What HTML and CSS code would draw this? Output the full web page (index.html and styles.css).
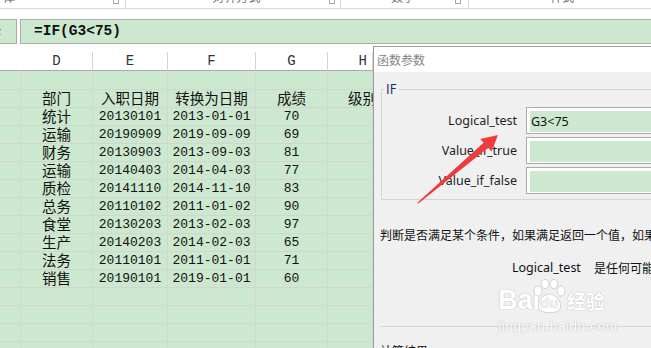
FILE: index.html
```html
<!DOCTYPE html>
<html lang="zh-CN">
<head>
    <meta charset="UTF-8">
    <title>函数参数</title>
    <link rel="stylesheet" href="styles.css">
</head>
<body>
    <div class="ribbon">
        <div class="group g1"><span class="glabel">字体</span><span class="launch"></span></div>
        <div class="group g2"><span class="glabel">对齐方式</span><span class="launch"></span></div>
        <div class="group g3"><span class="glabel">数字</span><span class="launch"></span></div>
        <div class="group g4"><span class="glabel">样式</span></div>
    </div>

    <div class="formula">
        <div class="fx-box"><span class="fx">fx</span></div>
        <div class="formula-box">=IF(G3&lt;75)</div>
    </div>

    <div class="sheet">
        <div class="row head"><div></div><div>D</div><div>E</div><div>F</div><div>G</div><div class="h">H</div></div>
        <div class="row first"><div></div><div></div><div></div><div></div><div></div><div></div></div>
        <div class="row titles"><div></div><div>部门</div><div>入职日期</div><div>转换为日期</div><div>成绩</div><div class="lvl">级别</div></div>
        <div class="row"><div></div><div>统计</div><div>20130101</div><div>2013-01-01</div><div>70</div><div></div></div>
        <div class="row"><div></div><div>运输</div><div>20190909</div><div>2019-09-09</div><div>69</div><div></div></div>
        <div class="row"><div></div><div>财务</div><div>20130903</div><div>2013-09-03</div><div>81</div><div></div></div>
        <div class="row"><div></div><div>运输</div><div>20140403</div><div>2014-04-03</div><div>77</div><div></div></div>
        <div class="row"><div></div><div>质检</div><div>20141110</div><div>2014-11-10</div><div>83</div><div></div></div>
        <div class="row"><div></div><div>总务</div><div>20110102</div><div>2011-01-02</div><div>90</div><div></div></div>
        <div class="row"><div></div><div>食堂</div><div>20130203</div><div>2013-02-03</div><div>97</div><div></div></div>
        <div class="row"><div></div><div>生产</div><div>20140203</div><div>2014-02-03</div><div>65</div><div></div></div>
        <div class="row"><div></div><div>法务</div><div>20110101</div><div>2011-01-01</div><div>71</div><div></div></div>
        <div class="row"><div></div><div>销售</div><div>20190101</div><div>2019-01-01</div><div>60</div><div></div></div>
        <div class="row"><div></div><div></div><div></div><div></div><div></div><div></div></div>
        <div class="row"><div></div><div></div><div></div><div></div><div></div><div></div></div>
        <div class="row"><div></div><div></div><div></div><div></div><div></div><div></div></div>
        <div class="row"><div></div><div></div><div></div><div></div><div></div><div></div></div>
    </div>

    <div class="dialog">
        <div class="dlg-title">函数参数</div>
        <div class="dlg-body">
            <fieldset class="args">
                <legend>IF</legend>
                <div class="arg"><label>Logical_test</label><div class="field"><div class="val">G3&lt;75</div></div></div>
                <div class="arg"><label>Value_if_true</label><div class="field"><div class="val"></div></div></div>
                <div class="arg"><label>Value_if_false</label><div class="field"><div class="val"></div></div></div>
            </fieldset>
            <p class="desc">判断是否满足某个条件，如果满足返回一个值，如果不满足则返回另一个值。</p>
            <p class="argdesc"><span>Logical_test</span><span>是任何可能被计算为 TRUE 或 FALSE 的数值或表达式。</span></p>
            <hr>
            <p class="result">计算结果 =</p>
        </div>
    </div>

    <!-- baidu jingyan watermark -->
    <div class="watermark">
        <div class="wm-logo">
            <span class="bai">Bai</span>
            <span class="paw">
                <svg width="34" height="36" viewBox="0 0 34 36">
                    <g fill="#fff" stroke="#d2d2d2" stroke-width="1">
                        <ellipse cx="6" cy="12" rx="4" ry="5"/>
                        <ellipse cx="13" cy="5" rx="4" ry="4.5"/>
                        <ellipse cx="22" cy="5" rx="4" ry="4.5"/>
                        <ellipse cx="29" cy="12" rx="4" ry="5"/>
                        <path d="M7 30 C4 22 12 15 17 15 C23 15 31 22 28 30 C26 35 9 35 7 30 Z"/>
                    </g>
                </svg>
                <span class="du">du</span>
            </span>
            <span class="jy">经验</span>
        </div>
        <div class="wm-url">jingyan.baidu.com</div>
    </div>

    <svg class="arrow" width="651" height="348" viewBox="0 0 651 348">
        <polygon fill="#ee3b3b" points="417.6,202.6 483.6,142.8 480.2,139 498,135 491.6,151.6 488.2,147.8 418.4,203.4"/>
    </svg>
</body>
</html>
```

FILE: styles.css
```css
* {
    box-sizing: border-box;
}
body {
    margin: 0;
    width: 651px;
    height: 348px;
    overflow: hidden;
    position: relative;
    background: #fff;
    font-family: "Noto Sans", "Noto Sans CJK SC", sans-serif;
    color: #111;
}

/* ribbon (only the bottom edge shows) */
.ribbon {
    display: flex;
    height: 9px;
    border-bottom: 1px solid #dadada;
    overflow: hidden;
}
.group {
    display: flex;
    align-items: flex-start;
    border-right: 1px solid #d8d8d8;
    font-family: "Noto Sans CJK SC", sans-serif;
    font-size: 12px;
    color: #777;
}
.glabel {
    line-height: 14px;
    margin-top: -10px;
}
.launch {
    width: 6px;
    height: 6px;
    margin-top: -2px;
    margin-left: auto;
    border: 1px solid #a8a8a8;
}
.g1 { width: 138px; }
.g1 .glabel { margin-left: -9px; }
.g1 .launch { margin-right: 6px; }
.g2 { width: 237px; }
.g2 .glabel { margin-left: 87px; }
.g2 .launch { margin-right: 5px; }
.g3 { width: 141px; }
.g3 .glabel { margin-left: 50px; }
.g3 .launch { margin-right: 7px; }
.g4 { width: 200px; border-right: 0; }
.g4 .glabel { margin-left: 81px; }

/* formula bar */
.formula {
    display: flex;
    height: 25px;
    margin-top: 10px;
}
.fx-box {
    width: 17px;
    border: 1px solid #ababab;
    border-left: 0;
    background: #cce8cf;
    overflow: hidden;
}
.fx {
    display: block;
    margin-left: -9px;
    font: italic bold 12px "Liberation Serif", serif;
    line-height: 22px;
    color: #2d8a3a;
}
.formula-box {
    flex: 1;
    margin-left: 3px;
    border: 1px solid #ababab;
    border-right: 0;
    background: #cce8cf;
    padding-left: 13px;
    font: bold 14.5px "Liberation Mono", monospace;
    line-height: 23px;
}

/* grid */
.sheet {
    margin-top: 8px;
    font: 13px "Liberation Mono", "Noto Sans CJK SC", monospace;
}
.row {
    display: grid;
    grid-template-columns: 21px 72px 75px 88px 72px 45px;
    height: 18px;
}
.row > div {
    border-right: 1px solid #d4d4d4;
    border-bottom: 1px solid #d4d4d4;
    background: #cce8cf;
    text-align: center;
    line-height: 17px;
    white-space: nowrap;
}
.row > div:nth-child(2),
.titles > div {
    font-family: "Noto Sans CJK SC", sans-serif;
    font-size: 14.5px;
    line-height: 15px;
}
.row.head,
.row.first {
    height: 19px;
}
.row.head > div {
    background: #fff;
    border-bottom-color: #a9a9a9;
    line-height: 18px;
    color: #333;
    font-family: "Liberation Mono", monospace;
    font-size: 14px;
}
.row.head > div:first-child {
    border-right-color: #fff;
}
.row.head .h {
    text-align: right;
    padding-right: 5px;
}
.row .lvl {
    text-align: left;
    padding-left: 20px;
}

/* dialog window */
.dialog {
    position: absolute;
    left: 373px;
    top: 46px;
    width: 430px;
    height: 320px;
    border-left: 1px solid #979f97;
    border-top: 1px solid #a0a0a0;
    background: #f0f0f0;
    font-family: "Noto Sans CJK SC", sans-serif;
}
.dlg-title {
    height: 25px;
    background: #fff;
    padding-left: 3px;
    font-size: 12px;
    line-height: 25px;
    color: #848484;
}
.dlg-body {
    padding-left: 7px;
}
.args {
    margin: 9px 0 0;
    padding: 10px 0 5px;
    border: 1px solid #d5d5d5;
    min-width: 0;
}
.args legend {
    margin-left: 2px;
    padding: 0 2px;
    font-size: 12.5px;
    line-height: 16px;
    color: #1b2d66;
}
.arg {
    display: grid;
    grid-template-columns: 135px 1fr;
    column-gap: 9px;
    align-items: center;
    height: 27px;
    margin-bottom: 3px;
}
.arg:last-child {
    margin-bottom: 0;
}
.arg label {
    text-align: right;
    font-family: "Noto Sans", sans-serif;
    font-size: 12.5px;
    color: #1e1e1e;
}
.field {
    height: 27px;
    border: 1px solid #ababab;
    background: #fff;
    padding: 3px 0 1px 3px;
}
.val {
    height: 21px;
    background: #cce8cf;
    padding-left: 1px;
    font-family: "Noto Sans", sans-serif;
    font-size: 12.5px;
    line-height: 21px;
}
.desc {
    margin: 27px 0 0 -1px;
    font-size: 12px;
    line-height: 16px;
    white-space: nowrap;
}
.argdesc {
    display: flex;
    gap: 13px;
    margin: 17px 0 0;
    padding-left: 131px;
    font-size: 12px;
    line-height: 16px;
    white-space: nowrap;
}
.argdesc span:first-child {
    font-family: "Noto Sans", sans-serif;
    font-size: 12.5px;
}
.dlg-body hr {
    margin: 50px 0 0 -1px;
    border: 0;
    border-top: 1px solid #d7d7d7;
}
.result {
    margin: 16px 0 0 -1px;
    font-size: 12px;
    line-height: 16px;
}

/* watermark over the dialog */
.watermark {
    position: absolute;
    left: 498px;
    top: 277px;
    color: #fff;
    text-shadow: 0 0 1px #bdbdbd, 0 0 1px #bdbdbd;
    pointer-events: none;
}
.wm-logo {
    display: flex;
    align-items: flex-end;
    height: 38px;
}
.bai {
    font: bold 27px "Liberation Sans", sans-serif;
    line-height: 30px;
}
.paw {
    position: relative;
    width: 34px;
    height: 36px;
    margin-left: -8px;
}
.paw svg {
    display: block;
}
.du {
    position: absolute;
    left: 8px;
    top: 15px;
    font: bold 15px "Liberation Sans", sans-serif;
    color: #f0f0f0;
    text-shadow: 0 0 1px #c4c4c4;
}
.jy {
    margin-left: 1px;
    font: bold 19px "Noto Sans CJK SC", sans-serif;
    line-height: 28px;
}
.wm-url {
    margin-top: 4px;
    font: 14px "Liberation Sans", sans-serif;
    letter-spacing: 0.4px;
    line-height: 14px;
}

.arrow {
    position: absolute;
    left: 0;
    top: 0;
    pointer-events: none;
}
```
